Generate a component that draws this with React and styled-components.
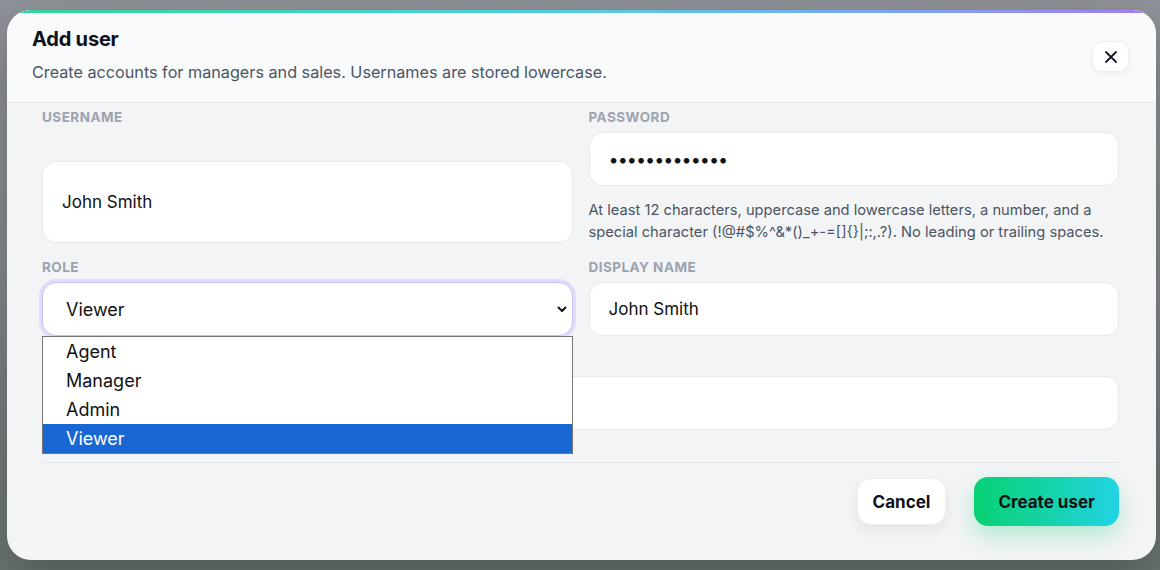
import React from "react";
import styled, { createGlobalStyle } from "styled-components";

const GlobalStyle = createGlobalStyle`
  html, body {
    margin: 0;
    padding: 0;
  }
  body {
    font-family: Inter, "Noto Sans", sans-serif;
    -webkit-font-smoothing: antialiased;
  }
  * {
    box-sizing: border-box;
  }
`;

const Backdrop = styled.div`
  width: 1160px;
  height: 570px;
  padding: 10px 4px 10px 7px;
  background: linear-gradient(180deg, #8f9298 0%, #858a8e 45%, #737a7b 80%, #6b7574 100%);
  overflow: hidden;
`;

const Modal = styled.div`
  position: relative;
  height: 550px;
  display: flex;
  flex-direction: column;
  background: #f3f4f5;
  border-radius: 24px;
  overflow: hidden;
  box-shadow: 0 20px 50px rgba(0, 0, 0, 0.25);

  &::before {
    content: "";
    position: absolute;
    top: 0;
    left: 0;
    right: 0;
    height: 3px;
    background: linear-gradient(90deg, #34d399 0%, #40d3c0 30%, #55cbe6 50%, #76a9ec 75%, #a47cf3 100%);
  }
`;

const Header = styled.div`
  display: flex;
  justify-content: space-between;
  align-items: flex-start;
  height: 93px;
  padding: 17px 27px 0 25px;
  background: #f9fafb;
  border-bottom: 1px solid #e4e6e9;
`;

const Title = styled.h2`
  margin: 0;
  font-size: 20px;
  line-height: 24px;
  font-weight: 700;
  color: #0b0f19;
  letter-spacing: -0.2px;
`;

const Subtitle = styled.p`
  margin: 9px 0 0;
  font-size: 16.2px;
  line-height: 24px;
  color: #4b5563;
`;

const CloseButton = styled.button`
  margin-top: 14px;
  width: 37px;
  height: 31px;
  display: flex;
  align-items: center;
  justify-content: center;
  background: #ffffff;
  border: 1px solid #eceef1;
  border-radius: 10px;
  box-shadow: 0 2px 6px rgba(0, 0, 0, 0.05);
  color: #111827;
  cursor: pointer;
  padding: 0;
`;

const Body = styled.div`
  display: flex;
  flex-direction: column;
  gap: 15px;
  padding: 5px 37px 0 35px;
`;

const Row = styled.div`
  display: grid;
  grid-template-columns: ${(props) => (props.single ? "1fr" : "1fr 1fr")};
  column-gap: 16px;
`;

const Field = styled.div`
  position: relative;
  display: flex;
  flex-direction: column;
`;

const Label = styled.label`
  min-height: 18px;
  font-size: 13.5px;
  line-height: 18px;
  font-weight: 700;
  letter-spacing: 0.035em;
  text-transform: uppercase;
  color: #9ca3af;
  margin-bottom: 6px;
`;

const Input = styled.div`
  display: flex;
  align-items: center;
  height: ${(props) => props.h || 54}px;
  margin-top: ${(props) => (props.pushDown ? "auto" : "0")};
  padding: 0 19px;
  background: #ffffff;
  border: 1px solid #e7e9ec;
  border-radius: 14px;
  font-size: 17px;
  color: #111111;
`;

const Dots = styled.span`
  font-size: 18px;
  letter-spacing: -1px;
  color: #111111;
`;

const Hint = styled.p`
  margin: 13px 0 0;
  font-size: 14.7px;
  line-height: 22px;
  color: #4b5563;
`;

const SelectBox = styled.div`
  position: relative;
  display: flex;
  align-items: center;
  justify-content: space-between;
  height: 54px;
  margin-bottom: 1px;
  padding: 0 4px 0 23px;
  background: #ffffff;
  border: 1.5px solid #c9bdf7;
  border-radius: 14px;
  box-shadow: 0 0 0 3px rgba(167, 139, 250, 0.22);
  font-size: 18px;
  color: #111111;
`;

const OptionList = styled.ul`
  position: absolute;
  top: calc(100% + 1px);
  left: -1px;
  right: -1px;
  margin: 0;
  padding: 0;
  list-style: none;
  background: #ffffff;
  border: 1px solid #767676;
  z-index: 5;
`;

const Option = styled.li`
  height: 29px;
  line-height: 29px;
  padding-left: 23px;
  font-size: 18px;
  color: ${(props) => (props.selected ? "#ffffff" : "#111111")};
  background: ${(props) => (props.selected ? "#1967d2" : "transparent")};
`;

const Footer = styled.div`
  display: flex;
  justify-content: flex-end;
  align-items: center;
  gap: 28px;
  margin: 32px 37px 0 35px;
  padding-top: 14px;
  border-top: 1px solid #e2e4e7;
`;

const Button = styled.button`
  height: ${(props) => (props.primary ? 49 : 47)}px;
  padding: 0 ${(props) => (props.primary ? 24 : 15)}px;
  font-family: inherit;
  font-size: 17px;
  font-weight: 700;
  color: #0f1115;
  border-radius: 14px;
  cursor: pointer;
  border: ${(props) => (props.primary ? "none" : "1px solid #eef0f2")};
  background: ${(props) =>
    props.primary
      ? "linear-gradient(90deg, #08d173 0%, #14d3a8 50%, #22d3e6 100%)"
      : "#ffffff"};
  box-shadow: ${(props) =>
    props.primary
      ? "0 10px 22px rgba(16, 200, 120, 0.28)"
      : "0 6px 14px rgba(0, 0, 0, 0.07)"};
`;

const roles = ["Agent", "Manager", "Admin", "Viewer"];

const passwordHint =
  "At least 12 characters, uppercase and lowercase letters, a number, and a special character (!@#$%^&*()_+-=[]{}|;:,.?). No leading or trailing spaces.";

export default function App() {
  return (
    <>
      <GlobalStyle />
      <Backdrop>
        <Modal>
          <Header>
            <div>
              <Title>Add user</Title>
              <Subtitle>
                Create accounts for managers and sales. Usernames are stored lowercase.
              </Subtitle>
            </div>
            <CloseButton aria-label="Close">
              <svg width="14" height="14" viewBox="0 0 14 14">
                <path
                  d="M2 2 L12 12 M12 2 L2 12"
                  stroke="currentColor"
                  strokeWidth="1.8"
                  strokeLinecap="round"
                />
              </svg>
            </CloseButton>
          </Header>

          <Body>
            <Row>
              <Field>
                <Label>Username</Label>
                <Input h={82} pushDown>
                  John Smith
                </Input>
              </Field>
              <Field>
                <Label>Password</Label>
                <Input>
                  <Dots>•••••••••••••</Dots>
                </Input>
                <Hint>{passwordHint}</Hint>
              </Field>
            </Row>

            <Row>
              <Field>
                <Label>Role</Label>
                <SelectBox>
                  <span>Viewer</span>
                  <svg width="12" height="8" viewBox="0 0 12 8">
                    <path
                      d="M2.5 2.5 L6 6 L9.5 2.5"
                      fill="none"
                      stroke="#111"
                      strokeWidth="2"
                      strokeLinecap="round"
                      strokeLinejoin="round"
                    />
                  </svg>
                  <OptionList>
                    {roles.map((r) => (
                      <Option key={r} selected={r === "Viewer"}>
                        {r}
                      </Option>
                    ))}
                  </OptionList>
                </SelectBox>
              </Field>
              <Field>
                <Label>Display name</Label>
                <Input>John Smith</Input>
              </Field>
            </Row>

            <Row single>
              <Field>
                <Label aria-label="Email" />
                <Input />
              </Field>
            </Row>
          </Body>

          <Footer>
            <Button>Cancel</Button>
            <Button primary>Create user</Button>
          </Footer>
        </Modal>
      </Backdrop>
    </>
  );
}
